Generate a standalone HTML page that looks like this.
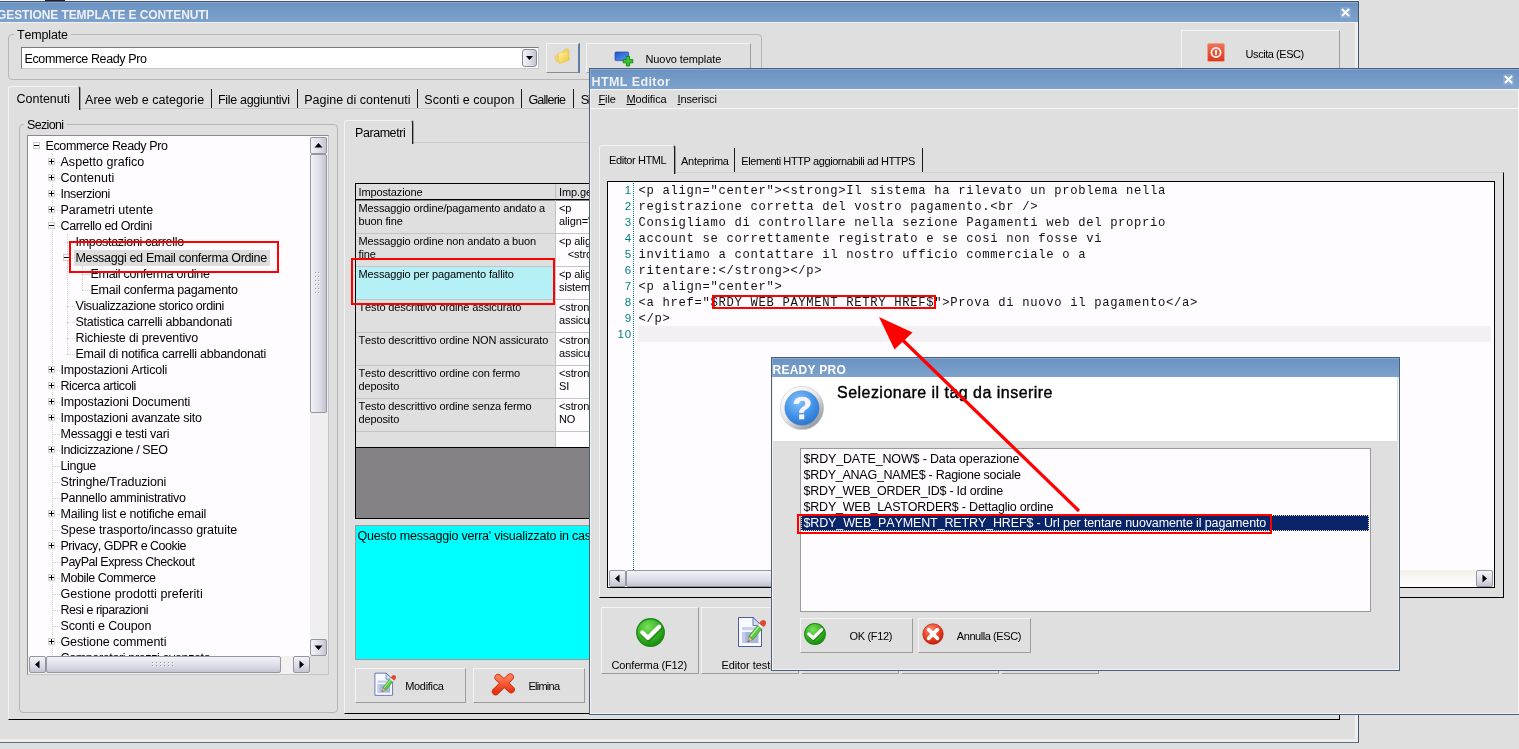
<!DOCTYPE html>
<html><head><meta charset="utf-8"><title>Gestione template e contenuti</title>
<style>
html,body{margin:0;padding:0}
body{font-kerning:none;will-change:transform;width:1519px;height:749px;overflow:hidden;background:#dfdfdf;position:relative;font-family:"Liberation Sans",sans-serif;color:#000}
.a{position:absolute;box-sizing:border-box}
.t13{font-size:12.5px;letter-spacing:-0.25px;white-space:nowrap;line-height:16px;margin-top:1px}
.t11{font-size:11px;letter-spacing:-0.12px;white-space:nowrap;line-height:13px;margin-top:1px}
.title{background:linear-gradient(#6a92c1,#7ea2cd);color:#eef0f4;font-weight:bold;white-space:nowrap}
.btn{border:1px solid;border-color:#f4f4f4 #9c9c9c #9c9c9c #f4f4f4;background:#dfdfdf;box-shadow:0 0 0 0 #000}
.grp{border:1px solid #b6b6b6;border-radius:4px}
.white{background:#fffcff}
.sb{background:linear-gradient(90deg,#f2f2f8,#dcdce6 60%,#c4c4d2);border:1px solid #9696a2;border-radius:2px}
.sbh{background:linear-gradient(#f2f2f8,#dcdce6 60%,#c4c4d2);border:1px solid #9696a2;border-radius:2px}
.red{border:2px solid #ff0000}
.tree div{position:absolute;height:16px;line-height:16px;font-size:12.5px;letter-spacing:-0.25px;white-space:nowrap}
.pm{position:absolute;width:7px;height:7px;box-sizing:border-box;border:1px solid #cdcdcd;background:#fff}
.pm:before{content:"";position:absolute;left:0px;top:2px;width:5px;height:1px;background:#000}
.pm.p:after{content:"";position:absolute;left:2px;top:0px;width:1px;height:5px;background:#000}
.code{font-family:"Liberation Mono",monospace;font-size:12.2px;letter-spacing:0.68px;line-height:16px;white-space:pre;color:#111;margin-top:1px}
.ln{font-size:11.5px;line-height:16px;color:#008080;text-align:right;letter-spacing:0.9px}
td{padding:0}
</style></head><body>

<div class="a" style="left:0;top:0;width:1359px;height:1px;background:#f6f6f6"></div>
<div class="a" style="left:45px;top:0;width:20px;height:1px;background:#222"></div>
<div class="a" style="left:0;top:1px;width:1359px;height:1px;background:#44546e"></div>
<div class="a" style="left:1355px;top:22px;width:3px;height:719px;background:#eeeeee"></div>
<div class="a" style="left:1358px;top:1px;width:1px;height:742px;background:#44546e"></div>
<div class="a" style="left:0;top:739px;width:1358px;height:3px;background:#eeeeee"></div>
<div class="a" style="left:0;top:742px;width:1359px;height:1px;background:#5a6c86"></div>
<div class="a title" style="left:0;top:2px;width:1358px;height:20px;font-size:12px;line-height:21px;letter-spacing:-0.1px;box-shadow:inset 0 1px 0 #86a8d2"><span style="position:absolute;left:-3px;top:3px">GESTIONE TEMPLATE E CONTENUTI</span></div>
<div class="a" style="left:0;top:22px;width:1355px;height:1px;background:#f0f0f0"></div>
<svg class="a" style="left:1340px;top:7px" width="11" height="11" viewBox="0 0 11 11"><rect width="11" height="11" fill="#ffffff" opacity="0.13"/><path d="M2.7 2.7 L8.3 8.3 M8.3 2.7 L2.7 8.3" stroke="#fff" stroke-width="2.1" stroke-linecap="square"/></svg>
<div class="a grp" style="left:8px;top:34px;width:754px;height:46px"></div>
<div class="a" style="left:14px;top:30px;width:57px;height:10px;background:#dfdfdf"></div>
<div class="a t13" style="left:17px;top:26px;letter-spacing:-0.16px;">Template</div>
<div class="a" style="left:21px;top:47px;width:518px;height:22px;background:#fff;border:1px solid #8e8e8e;border-color:#7a7a7a #c8c8c8 #c8c8c8 #7a7a7a"></div>
<div class="a t13" style="left:24.5px;top:50px;letter-spacing:-0.37px;">Ecommerce Ready Pro</div>
<div class="a sb" style="left:522px;top:49px;width:15px;height:18px;border-radius:3px;border-color:#8a8a9a"></div>
<svg class="a" style="left:526px;top:56px" width="8" height="5"><path d="M0 0 L7 0 L3.5 4 Z" fill="#000"/></svg>
<div class="a btn" style="left:546px;top:43px;width:34px;height:30px;border-right:2px solid #5f7fa8;border-bottom:1px solid #8a8a8a"></div>
<svg class="a" style="left:554px;top:48px" width="17" height="17" viewBox="0 0 17 17"><defs><linearGradient id="fg" x1="0" y1="0" x2="1" y2="1"><stop offset="0" stop-color="#fff6a8"/><stop offset="1" stop-color="#efc52e"/></linearGradient></defs><path d="M9.5 2.2 L11 1 L14.6 1 L15.2 11.5 L11 9 Z" fill="#f3d86a" stroke="#d8b84a" stroke-width="0.5"/><path d="M0.6 8.5 L4.2 5.2 L5.4 15.6 L1.6 13.2 Z" fill="#f2d55c" stroke="#d9c4e8" stroke-width="0.5"/><path d="M4.2 5.4 L13.8 2.8 L14.8 12.4 L5.4 15.6 Z" fill="url(#fg)" stroke="#e6c040" stroke-width="0.5"/></svg>
<div class="a btn" style="left:586px;top:43px;width:165px;height:30px"></div>
<svg class="a" style="left:614px;top:51px" width="20" height="16" viewBox="0 0 20 16"><defs><linearGradient id="mg" x1="0" y1="0" x2="1" y2="1"><stop offset="0" stop-color="#1f52c8"/><stop offset="1" stop-color="#5a9cf4"/></linearGradient></defs><rect x="1" y="1" width="13.6" height="8.6" rx="1" fill="url(#mg)" stroke="#2448b0" stroke-width="0.7"/><path d="M12.4 5.4 h3.2 v3.2 h3.2 v3.2 h-3.2 v3.2 h-3.2 v-3.2 h-3.2 v-3.2 h3.2 z" fill="#34c634" stroke="#118411" stroke-width="0.9"/></svg>
<div class="a t11" style="left:645.5px;top:52px;letter-spacing:-0.1px;">Nuovo template</div>
<div class="a btn" style="left:1181px;top:30px;width:159px;height:44px"></div>
<svg class="a" style="left:1207px;top:43px" width="18" height="19" viewBox="0 0 18 19"><defs><linearGradient id="ug" x1="0" y1="0" x2="0" y2="1"><stop offset="0" stop-color="#f2735a"/><stop offset="1" stop-color="#d8381c"/></linearGradient></defs><rect x="0.5" y="0.5" width="17" height="18" rx="1.5" fill="url(#ug)" stroke="#e9a08c"/><circle cx="9" cy="9.5" r="4.6" fill="none" stroke="#fff" stroke-width="1.6"/><rect x="8.2" y="6.8" width="1.6" height="5.4" fill="#fff"/></svg>
<div class="a t11" style="left:1245.6px;top:47px;letter-spacing:-0.45px;">Uscita (ESC)</div>
<div class="a" style="left:8px;top:108px;width:1332px;height:612px;border:1px solid #f2f2f2;border-right:1px solid #000;border-bottom:1px solid #000;border-top:1px solid #c8c8c8"></div>
<div class="a t13" style="left:85px;top:91px;letter-spacing:0.05px;">Aree web e categorie</div>
<div class="a" style="left:211px;top:89px;width:1px;height:19px;background:#1a1a1a"></div>
<div class="a t13" style="left:218px;top:91px;letter-spacing:-0.32px;">File aggiuntivi</div>
<div class="a" style="left:297px;top:89px;width:1px;height:19px;background:#1a1a1a"></div>
<div class="a t13" style="left:304.3px;top:91px;letter-spacing:-0.01px;">Pagine di contenuti</div>
<div class="a" style="left:417px;top:89px;width:1px;height:19px;background:#1a1a1a"></div>
<div class="a t13" style="left:424.3px;top:91px;letter-spacing:0.04px;">Sconti e coupon</div>
<div class="a" style="left:521px;top:89px;width:1px;height:19px;background:#1a1a1a"></div>
<div class="a t13" style="left:528.4px;top:91px;letter-spacing:-0.78px;">Gallerie</div>
<div class="a" style="left:573px;top:89px;width:1px;height:19px;background:#1a1a1a"></div>
<div class="a t13" style="left:580.8px;top:91px;letter-spacing:-1.41px;">Si</div>
<div class="a" style="left:640px;top:89px;width:1px;height:19px;background:#1a1a1a"></div>
<div class="a" style="left:8px;top:86px;width:72px;height:24px;background:#dfdfdf;border:1px solid #f2f2f2;border-right:1px solid #1a1a1a;box-shadow:1px 0 0 #9a9a9a;border-bottom:none;border-radius:3px 3px 0 0"></div>
<div class="a t13" style="left:16.5px;top:90px;letter-spacing:-0.0px;">Contenuti</div>
<div class="a grp" style="left:19px;top:124px;width:319px;height:589px"></div>
<div class="a" style="left:24px;top:120px;width:43px;height:10px;background:#dfdfdf"></div>
<div class="a t13" style="left:27px;top:116px;letter-spacing:-0.67px;">Sezioni</div>
<div class="a white tree" style="left:27px;top:135px;width:302px;height:540px;border:1px solid #9a9a9a;border-color:#8a8a8a #c4c4c4 #c4c4c4 #8a8a8a;overflow:hidden">
<i class="a" style="left:24px;top:18px;width:0;height:521px;border-left:1px dotted #cfcfcf"></i>
<i class="a" style="left:39px;top:98px;width:0;height:120px;border-left:1px dotted #cfcfcf"></i>
<i class="a" style="left:54px;top:130px;width:0;height:24px;border-left:1px dotted #cfcfcf"></i>
<div style="left:17.5px;top:2px;letter-spacing:-0.37px">Ecommerce Ready Pro</div>
<span class="pm" style="left:5.0px;top:6px"></span>
<i class="a" style="left:28.5px;top:26px;width:3.0px;height:0;border-top:1px dotted #cfcfcf"></i>
<div style="left:32.5px;top:18px;letter-spacing:0.03px">Aspetto grafico</div>
<span class="pm p" style="left:20.0px;top:22px"></span>
<i class="a" style="left:28.5px;top:42px;width:3.0px;height:0;border-top:1px dotted #cfcfcf"></i>
<div style="left:32.5px;top:34px;letter-spacing:0.02px">Contenuti</div>
<span class="pm p" style="left:20.0px;top:38px"></span>
<i class="a" style="left:28.5px;top:58px;width:3.0px;height:0;border-top:1px dotted #cfcfcf"></i>
<div style="left:32.5px;top:50px;letter-spacing:-0.41px">Inserzioni</div>
<span class="pm p" style="left:20.0px;top:54px"></span>
<i class="a" style="left:28.5px;top:74px;width:3.0px;height:0;border-top:1px dotted #cfcfcf"></i>
<div style="left:32.5px;top:66px;letter-spacing:0.02px">Parametri utente</div>
<span class="pm p" style="left:20.0px;top:70px"></span>
<i class="a" style="left:28.5px;top:90px;width:3.0px;height:0;border-top:1px dotted #cfcfcf"></i>
<div style="left:32.5px;top:82px;letter-spacing:-0.37px">Carrello ed Ordini</div>
<span class="pm" style="left:20.0px;top:86px"></span>
<i class="a" style="left:38.5px;top:106px;width:8.0px;height:0;border-top:1px dotted #cfcfcf"></i>
<div style="left:47.5px;top:98px;letter-spacing:-0.3px">Impostazioni carrello</div>
<i class="a" style="left:43.5px;top:122px;width:3.0px;height:0;border-top:1px dotted #cfcfcf"></i>
<div style="left:47.5px;top:114px;letter-spacing:-0.33px;background:#dcdcdc;padding:0 3px 0 2px;margin-left:-2px">Messaggi ed Email conferma Ordine</div>
<span class="pm" style="left:35.0px;top:118px"></span>
<i class="a" style="left:53.5px;top:138px;width:8.0px;height:0;border-top:1px dotted #cfcfcf"></i>
<div style="left:62.5px;top:130px;letter-spacing:-0.28px">Email conferma ordine</div>
<i class="a" style="left:53.5px;top:154px;width:8.0px;height:0;border-top:1px dotted #cfcfcf"></i>
<div style="left:62.5px;top:146px;letter-spacing:-0.23px">Email conferma pagamento</div>
<i class="a" style="left:38.5px;top:170px;width:8.0px;height:0;border-top:1px dotted #cfcfcf"></i>
<div style="left:47.5px;top:162px;letter-spacing:-0.4px">Visualizzazione storico ordini</div>
<i class="a" style="left:38.5px;top:186px;width:8.0px;height:0;border-top:1px dotted #cfcfcf"></i>
<div style="left:47.5px;top:178px;letter-spacing:-0.22px">Statistica carrelli abbandonati</div>
<i class="a" style="left:38.5px;top:202px;width:8.0px;height:0;border-top:1px dotted #cfcfcf"></i>
<div style="left:47.5px;top:194px;letter-spacing:-0.14px">Richieste di preventivo</div>
<i class="a" style="left:38.5px;top:218px;width:8.0px;height:0;border-top:1px dotted #cfcfcf"></i>
<div style="left:47.5px;top:210px;letter-spacing:-0.25px">Email di notifica carrelli abbandonati</div>
<i class="a" style="left:28.5px;top:234px;width:3.0px;height:0;border-top:1px dotted #cfcfcf"></i>
<div style="left:32.5px;top:226px;letter-spacing:-0.22px">Impostazioni Articoli</div>
<span class="pm p" style="left:20.0px;top:230px"></span>
<i class="a" style="left:28.5px;top:250px;width:3.0px;height:0;border-top:1px dotted #cfcfcf"></i>
<div style="left:32.5px;top:242px;letter-spacing:-0.41px">Ricerca articoli</div>
<span class="pm p" style="left:20.0px;top:246px"></span>
<i class="a" style="left:28.5px;top:266px;width:3.0px;height:0;border-top:1px dotted #cfcfcf"></i>
<div style="left:32.5px;top:258px;letter-spacing:-0.17px">Impostazioni Documenti</div>
<span class="pm p" style="left:20.0px;top:262px"></span>
<i class="a" style="left:28.5px;top:282px;width:3.0px;height:0;border-top:1px dotted #cfcfcf"></i>
<div style="left:32.5px;top:274px;letter-spacing:-0.23px">Impostazioni avanzate sito</div>
<span class="pm p" style="left:20.0px;top:278px"></span>
<i class="a" style="left:23.5px;top:298px;width:8.0px;height:0;border-top:1px dotted #cfcfcf"></i>
<div style="left:32.5px;top:290px;letter-spacing:-0.25px">Messaggi e testi vari</div>
<i class="a" style="left:28.5px;top:314px;width:3.0px;height:0;border-top:1px dotted #cfcfcf"></i>
<div style="left:32.5px;top:306px;letter-spacing:-0.42px">Indicizzazione / SEO</div>
<span class="pm p" style="left:20.0px;top:310px"></span>
<i class="a" style="left:23.5px;top:330px;width:8.0px;height:0;border-top:1px dotted #cfcfcf"></i>
<div style="left:32.5px;top:322px;letter-spacing:-0.35px">Lingue</div>
<i class="a" style="left:23.5px;top:346px;width:8.0px;height:0;border-top:1px dotted #cfcfcf"></i>
<div style="left:32.5px;top:338px;letter-spacing:-0.14px">Stringhe/Traduzioni</div>
<i class="a" style="left:23.5px;top:362px;width:8.0px;height:0;border-top:1px dotted #cfcfcf"></i>
<div style="left:32.5px;top:354px;letter-spacing:-0.33px">Pannello amministrativo</div>
<i class="a" style="left:28.5px;top:378px;width:3.0px;height:0;border-top:1px dotted #cfcfcf"></i>
<div style="left:32.5px;top:370px;letter-spacing:-0.22px">Mailing list e notifiche email</div>
<span class="pm p" style="left:20.0px;top:374px"></span>
<i class="a" style="left:23.5px;top:394px;width:8.0px;height:0;border-top:1px dotted #cfcfcf"></i>
<div style="left:32.5px;top:386px;letter-spacing:-0.08px">Spese trasporto/incasso gratuite</div>
<i class="a" style="left:28.5px;top:410px;width:3.0px;height:0;border-top:1px dotted #cfcfcf"></i>
<div style="left:32.5px;top:402px;letter-spacing:-0.52px">Privacy, GDPR e Cookie</div>
<span class="pm p" style="left:20.0px;top:406px"></span>
<i class="a" style="left:23.5px;top:426px;width:8.0px;height:0;border-top:1px dotted #cfcfcf"></i>
<div style="left:32.5px;top:418px;letter-spacing:-0.46px">PayPal Express Checkout</div>
<i class="a" style="left:28.5px;top:442px;width:3.0px;height:0;border-top:1px dotted #cfcfcf"></i>
<div style="left:32.5px;top:434px;letter-spacing:-0.42px">Mobile Commerce</div>
<span class="pm p" style="left:20.0px;top:438px"></span>
<i class="a" style="left:23.5px;top:458px;width:8.0px;height:0;border-top:1px dotted #cfcfcf"></i>
<div style="left:32.5px;top:450px;letter-spacing:0.07px">Gestione prodotti preferiti</div>
<i class="a" style="left:23.5px;top:474px;width:8.0px;height:0;border-top:1px dotted #cfcfcf"></i>
<div style="left:32.5px;top:466px;letter-spacing:-0.5px">Resi e riparazioni</div>
<i class="a" style="left:23.5px;top:490px;width:8.0px;height:0;border-top:1px dotted #cfcfcf"></i>
<div style="left:32.5px;top:482px;letter-spacing:-0.11px">Sconti e Coupon</div>
<i class="a" style="left:28.5px;top:506px;width:3.0px;height:0;border-top:1px dotted #cfcfcf"></i>
<div style="left:32.5px;top:498px;letter-spacing:-0.11px">Gestione commenti</div>
<span class="pm p" style="left:20.0px;top:502px"></span>
<i class="a" style="left:23.5px;top:522px;width:8.0px;height:0;border-top:1px dotted #cfcfcf"></i>
<div style="left:32.5px;top:514px;letter-spacing:-0.37px">Comparatori prezzi avanzato</div>
</div>
<div class="a" style="left:310px;top:137px;width:18px;height:520px;background:#efefef"></div>
<div class="a sb" style="left:310px;top:137px;width:17px;height:17px"></div>
<svg class="a" style="left:314px;top:142px" width="9" height="6"><path d="M0.5 5.5 L8.5 5.5 L4.5 1 Z" fill="#000"/></svg>
<div class="a sb" style="left:310px;top:154px;width:17px;height:259px"></div>
<i class="a" style="left:315px;top:272px;width:1px;height:1px;background:#9a9aa8;box-shadow:3px 0 #9a9aa8,1px 1px #fff,4px 1px #fff"></i>
<i class="a" style="left:315px;top:276px;width:1px;height:1px;background:#9a9aa8;box-shadow:3px 0 #9a9aa8,1px 1px #fff,4px 1px #fff"></i>
<i class="a" style="left:315px;top:280px;width:1px;height:1px;background:#9a9aa8;box-shadow:3px 0 #9a9aa8,1px 1px #fff,4px 1px #fff"></i>
<i class="a" style="left:315px;top:284px;width:1px;height:1px;background:#9a9aa8;box-shadow:3px 0 #9a9aa8,1px 1px #fff,4px 1px #fff"></i>
<i class="a" style="left:315px;top:288px;width:1px;height:1px;background:#9a9aa8;box-shadow:3px 0 #9a9aa8,1px 1px #fff,4px 1px #fff"></i>
<i class="a" style="left:315px;top:292px;width:1px;height:1px;background:#9a9aa8;box-shadow:3px 0 #9a9aa8,1px 1px #fff,4px 1px #fff"></i>
<div class="a sb" style="left:310px;top:639px;width:17px;height:17px"></div>
<svg class="a" style="left:314px;top:645px" width="9" height="6"><path d="M0.5 0.5 L8.5 0.5 L4.5 5 Z" fill="#000"/></svg>
<div class="a" style="left:28px;top:656px;width:300px;height:18px;background:#f3f1f0"></div>
<div class="a" style="left:310px;top:656px;width:18px;height:18px;background:#dfdfdf"></div>
<div class="a sbh" style="left:29px;top:656px;width:17px;height:17px"></div>
<svg class="a" style="left:34px;top:660px" width="6" height="9"><path d="M5.5 0.5 L5.5 8.5 L1 4.5 Z" fill="#000"/></svg>
<div class="a sbh" style="left:46px;top:656px;width:235px;height:17px"></div>
<i class="a" style="left:152px;top:662px;width:1px;height:1px;background:#9a9aa8;box-shadow:0 3px #9a9aa8,1px 1px #fff,1px 4px #fff"></i>
<i class="a" style="left:156px;top:662px;width:1px;height:1px;background:#9a9aa8;box-shadow:0 3px #9a9aa8,1px 1px #fff,1px 4px #fff"></i>
<i class="a" style="left:160px;top:662px;width:1px;height:1px;background:#9a9aa8;box-shadow:0 3px #9a9aa8,1px 1px #fff,1px 4px #fff"></i>
<i class="a" style="left:164px;top:662px;width:1px;height:1px;background:#9a9aa8;box-shadow:0 3px #9a9aa8,1px 1px #fff,1px 4px #fff"></i>
<i class="a" style="left:168px;top:662px;width:1px;height:1px;background:#9a9aa8;box-shadow:0 3px #9a9aa8,1px 1px #fff,1px 4px #fff"></i>
<i class="a" style="left:172px;top:662px;width:1px;height:1px;background:#9a9aa8;box-shadow:0 3px #9a9aa8,1px 1px #fff,1px 4px #fff"></i>
<div class="a sbh" style="left:293px;top:656px;width:17px;height:17px"></div>
<svg class="a" style="left:299px;top:660px" width="6" height="9"><path d="M0.5 0.5 L0.5 8.5 L5 4.5 Z" fill="#000"/></svg>
<div class="a red" style="left:69px;top:241px;width:210px;height:32px"></div>
<div class="a" style="left:344px;top:142px;width:400px;height:572px;border:1px solid #f2f2f2;border-bottom:1px solid #000;border-top:1px solid #c8c8c8"></div>
<div class="a" style="left:344px;top:120px;width:69px;height:24px;background:#dfdfdf;border:1px solid #f2f2f2;border-right:1px solid #1a1a1a;box-shadow:1px 0 0 #9a9a9a;border-bottom:none;border-radius:3px 3px 0 0"></div>
<div class="a t13" style="left:355px;top:124px;letter-spacing:-0.44px;">Parametri</div>
<div class="a" style="left:355px;top:183px;width:300px;height:336px;background:#848284;border:1px solid #000"></div>
<div class="a" style="left:356px;top:184px;width:300px;height:16px;background:#dfdfdf;border-bottom:1px solid #000"></div>
<div class="a t11" style="left:358.5px;top:185px">Impostazione</div>
<div class="a t11" style="left:559px;top:185px">Imp.gen</div>
<div class="a" style="left:555px;top:184px;width:1px;height:15px;background:#c0c0c0"></div>
<div class="a t11" style="left:356px;top:200px;width:199px;height:33px;background:#dfdfdf;border-bottom:1px solid #c4c4c4;padding:1px 0 0 2.5px;white-space:nowrap">Messaggio ordine/pagamento andato a<br>buon fine</div>
<div class="a" style="left:555px;top:200px;width:1px;height:33px;background:#c4c4c4"></div>
<div class="a t11" style="left:556px;top:200px;width:60px;height:33px;background:#fffcff;border-bottom:1px solid #c4c4c4;padding:1px 0 0 3px;overflow:hidden">&lt;p<br>align=&quot;c</div>
<div class="a t11" style="left:356px;top:233px;width:199px;height:33px;background:#dfdfdf;border-bottom:1px solid #c4c4c4;padding:1px 0 0 2.5px;white-space:nowrap">Messaggio ordine non andato a buon<br>fine</div>
<div class="a" style="left:555px;top:233px;width:1px;height:33px;background:#c4c4c4"></div>
<div class="a t11" style="left:556px;top:233px;width:60px;height:33px;background:#fffcff;border-bottom:1px solid #c4c4c4;padding:1px 0 0 3px;overflow:hidden">&lt;p align<br>&nbsp; &nbsp;&lt;stron</div>
<div class="a t11" style="left:356px;top:266px;width:199px;height:33px;background:#b4f0f6;border-bottom:1px solid #c4c4c4;padding:1px 0 0 2.5px;white-space:nowrap">Messaggio per pagamento fallito</div>
<div class="a" style="left:555px;top:266px;width:1px;height:33px;background:#c4c4c4"></div>
<div class="a t11" style="left:556px;top:266px;width:60px;height:33px;background:#fffcff;border-bottom:1px solid #c4c4c4;padding:1px 0 0 3px;overflow:hidden">&lt;p align<br>sistema</div>
<div class="a t11" style="left:356px;top:299px;width:199px;height:33px;background:#dfdfdf;border-bottom:1px solid #c4c4c4;padding:1px 0 0 2.5px;white-space:nowrap">Testo descrittivo ordine assicurato</div>
<div class="a" style="left:555px;top:299px;width:1px;height:33px;background:#c4c4c4"></div>
<div class="a t11" style="left:556px;top:299px;width:60px;height:33px;background:#fffcff;border-bottom:1px solid #c4c4c4;padding:1px 0 0 3px;overflow:hidden">&lt;strong<br>assicura</div>
<div class="a t11" style="left:356px;top:332px;width:199px;height:33px;background:#dfdfdf;border-bottom:1px solid #c4c4c4;padding:1px 0 0 2.5px;white-space:nowrap">Testo descrittivo ordine NON assicurato</div>
<div class="a" style="left:555px;top:332px;width:1px;height:33px;background:#c4c4c4"></div>
<div class="a t11" style="left:556px;top:332px;width:60px;height:33px;background:#fffcff;border-bottom:1px solid #c4c4c4;padding:1px 0 0 3px;overflow:hidden">&lt;strong<br>assicura</div>
<div class="a t11" style="left:356px;top:365px;width:199px;height:33px;background:#dfdfdf;border-bottom:1px solid #c4c4c4;padding:1px 0 0 2.5px;white-space:nowrap">Testo descrittivo ordine con fermo<br>deposito</div>
<div class="a" style="left:555px;top:365px;width:1px;height:33px;background:#c4c4c4"></div>
<div class="a t11" style="left:556px;top:365px;width:60px;height:33px;background:#fffcff;border-bottom:1px solid #c4c4c4;padding:1px 0 0 3px;overflow:hidden">&lt;strong<br>SI</div>
<div class="a t11" style="left:356px;top:398px;width:199px;height:33px;background:#dfdfdf;border-bottom:1px solid #c4c4c4;padding:1px 0 0 2.5px;white-space:nowrap">Testo descrittivo ordine senza fermo<br>deposito</div>
<div class="a" style="left:555px;top:398px;width:1px;height:33px;background:#c4c4c4"></div>
<div class="a t11" style="left:556px;top:398px;width:60px;height:33px;background:#fffcff;border-bottom:1px solid #c4c4c4;padding:1px 0 0 3px;overflow:hidden">&lt;strong<br>NO</div>
<div class="a t11" style="left:356px;top:431px;width:199px;height:16px;background:#dfdfdf;border-bottom:1px solid #c4c4c4;padding:1px 0 0 2.5px;white-space:nowrap"></div>
<div class="a" style="left:555px;top:431px;width:1px;height:16px;background:#c4c4c4"></div>
<div class="a t11" style="left:556px;top:431px;width:60px;height:16px;background:#fffcff;border-bottom:1px solid #c4c4c4;padding:1px 0 0 3px;overflow:hidden"></div>
<div class="a" style="left:356px;top:447px;width:300px;height:1px;background:#000"></div>
<div class="a red" style="left:351px;top:258px;width:204px;height:47px"></div>
<div class="a" style="left:355px;top:525px;width:300px;height:135px;background:#00ffff;border:1px solid #9a9a9a"></div>
<div class="a t13" style="left:357.5px;top:527px;letter-spacing:-0.22px">Questo messaggio verra' visualizzato in caso di</div>
<div class="a btn" style="left:355px;top:668px;width:111px;height:35px"></div>
<svg class="a" style="left:373px;top:672px" width="23" height="24.5" viewBox="0 0 30 32"><path d="M2.5 1.5 H17 L25.5 9.5 V30.5 H2.5 Z" fill="#f6f9ff" stroke="#4c5c9c" stroke-width="1"/><path d="M17 1.5 V9.5 H25.5 Z" fill="#cfe0f8" stroke="#4c5c9c" stroke-width="0.8"/><rect x="6" y="11" width="16.5" height="3.2" fill="#c6d0f0"/><rect x="6" y="16" width="16.5" height="11" fill="#a9b5df"/><rect x="6" y="16" width="3.4" height="11" fill="#c0caec"/><path d="M17.06 23.54 L12.88 20.12 L11.6 26 Z" fill="#d8b888" stroke="#8a7a6a" stroke-width="0.5"/><path d="M12.9 24.2 L11.6 26 L13.6 25 Z" fill="#444"/><path d="M17.06 23.54 L12.88 20.12 L21.76 9.3 L25.94 12.72 Z" fill="#5cc83c" stroke="#2f9220" stroke-width="0.6"/><path d="M14.6 20.6 L22.6 10.9" stroke="#b4f0a0" stroke-width="1.3" fill="none"/><path d="M21.76 9.3 L25.94 12.72 L27.52 10.79 L23.34 7.37 Z" fill="#f4f4f4" stroke="#b8b8b8" stroke-width="0.4"/><path d="M23.34 7.37 L27.52 10.79 Q31 8.4 29.2 5.2 Q26.4 2.6 23.34 7.37 Z" fill="#e8452a" stroke="#c02a14" stroke-width="0.4"/></svg>
<div class="a t11" style="left:405.2px;top:679px;letter-spacing:-0.31px;">Modifica</div>
<div class="a btn" style="left:473px;top:668px;width:112px;height:35px"></div>
<svg class="a" style="left:491px;top:672px" width="25" height="24" viewBox="0 0 25 24"><defs><linearGradient id="xg" x1="0" y1="0" x2="0" y2="1"><stop offset="0" stop-color="#ff7a56"/><stop offset="1" stop-color="#e63414"/></linearGradient></defs><g fill="none" stroke-linecap="round"><path d="M4.6 19.6 L19.2 5.2 M7.2 5.6 L20.2 17.6" stroke="#c62a0c" stroke-width="7.4"/><path d="M4.6 19.6 L19.2 5.2 M7.2 5.6 L20.2 17.6" stroke="url(#xg)" stroke-width="6"/></g></svg>
<div class="a t11" style="left:528.4px;top:679px;letter-spacing:-0.74px;">Elimina</div>
<div class="a" style="left:589px;top:68px;width:931px;height:647px;background:#dfdfdf;border:1px solid #4a607c;box-shadow:inset 1px 1px 0 #f2f2f2,inset -1px -1px 0 #f2f2f2"></div>
<div class="a title" style="left:590px;top:69px;width:929px;height:20px;box-shadow:inset 1px 1px 0 #86a8d2;font-size:12.5px;line-height:21px;letter-spacing:0.4px"><span style="position:absolute;left:1.5px;top:3px">HTML Editor</span></div>
<svg class="a" style="left:1503px;top:74px" width="11" height="11" viewBox="0 0 11 11"><rect width="11" height="11" fill="#ffffff" opacity="0.13"/><path d="M2.7 2.7 L8.3 8.3 M8.3 2.7 L2.7 8.3" stroke="#fff" stroke-width="2.1" stroke-linecap="square"/></svg>
<div class="a t11" style="left:598.5px;top:92px"><u>F</u>ile</div>
<div class="a t11" style="left:626.5px;top:92px"><u>M</u>odifica</div>
<div class="a t11" style="left:677.5px;top:92px"><u>I</u>nserisci</div>
<div class="a" style="left:591px;top:108px;width:928px;height:1px;background:#f6f6f6"></div>
<div class="a" style="left:591px;top:89px;width:928px;height:1px;background:#f4f4f4"></div>
<div class="a" style="left:599px;top:172px;width:905px;height:426px;border:1px solid #f2f2f2;border-top:1px solid #d0d0d0;border-right:1px solid #000;border-bottom:1px solid #000"></div>
<div class="a t11" style="left:681px;top:153.5px;letter-spacing:-0.27px;">Anteprima</div>
<div class="a" style="left:734px;top:148px;width:1px;height:24px;background:#1a1a1a"></div>
<div class="a t11" style="left:741.3px;top:153.5px;letter-spacing:-0.42px;">Elementi HTTP aggiornabili ad HTTPS</div>
<div class="a" style="left:922px;top:148px;width:1px;height:24px;background:#1a1a1a"></div>
<div class="a" style="left:599px;top:145px;width:76px;height:29px;background:#dfdfdf;border:1px solid #f2f2f2;border-right:1px solid #1a1a1a;box-shadow:1px 0 0 #9a9a9a;border-bottom:none;border-radius:3px 3px 0 0"></div>
<div class="a t11" style="left:609px;top:153px;letter-spacing:-0.4px">Editor HTML</div>
<div class="a white" style="left:607px;top:181px;width:888px;height:407px;border:1px solid #000"></div>
<div class="a" style="left:638px;top:326px;width:853px;height:16px;background:#f3f0f3"></div>
<div class="a" style="left:633px;top:183px;width:0;height:387px;border-left:1px dotted #008080"></div>
<div class="a ln" style="left:609px;top:182px;width:23px">1</div>
<div class="a code" style="left:638.5px;top:182px">&lt;p align="center"&gt;&lt;strong&gt;Il sistema ha rilevato un problema nella</div>
<div class="a ln" style="left:609px;top:198px;width:23px">2</div>
<div class="a code" style="left:638.5px;top:198px">registrazione corretta del vostro pagamento.&lt;br /&gt;</div>
<div class="a ln" style="left:609px;top:214px;width:23px">3</div>
<div class="a code" style="left:638.5px;top:214px">Consigliamo di controllare nella sezione Pagamenti web del proprio</div>
<div class="a ln" style="left:609px;top:230px;width:23px">4</div>
<div class="a code" style="left:638.5px;top:230px">account se correttamente registrato e se cosi non fosse vi</div>
<div class="a ln" style="left:609px;top:246px;width:23px">5</div>
<div class="a code" style="left:638.5px;top:246px">invitiamo a contattare il nostro ufficio commerciale o a</div>
<div class="a ln" style="left:609px;top:262px;width:23px">6</div>
<div class="a code" style="left:638.5px;top:262px">ritentare:&lt;/strong&gt;&lt;/p&gt;</div>
<div class="a ln" style="left:609px;top:278px;width:23px">7</div>
<div class="a code" style="left:638.5px;top:278px">&lt;p align="center"&gt;</div>
<div class="a ln" style="left:609px;top:294px;width:23px">8</div>
<div class="a code" style="left:638.5px;top:294px">&lt;a href="$RDY_WEB_PAYMENT_RETRY_HREF$"&gt;Prova di nuovo il pagamento&lt;/a&gt;</div>
<div class="a ln" style="left:609px;top:310px;width:23px">9</div>
<div class="a code" style="left:638.5px;top:310px">&lt;/p&gt;</div>
<div class="a ln" style="left:609px;top:326px;width:23px">10</div>
<div class="a" style="left:609px;top:570px;width:885px;height:17px;background:linear-gradient(#f3f1ea,#fff)"></div>
<div class="a sbh" style="left:609px;top:570px;width:17px;height:17px"></div>
<svg class="a" style="left:614px;top:574px" width="6" height="9"><path d="M5.5 0.5 L5.5 8.5 L1 4.5 Z" fill="#000"/></svg>
<div class="a sbh" style="left:626px;top:570px;width:720px;height:17px"></div>
<div class="a sbh" style="left:1476px;top:570px;width:17px;height:17px"></div>
<svg class="a" style="left:1482px;top:574px" width="6" height="9"><path d="M0.5 0.5 L0.5 8.5 L5 4.5 Z" fill="#000"/></svg>
<div class="a red" style="left:711.5px;top:295px;width:224px;height:14px"></div>
<div class="a btn" style="left:601px;top:607px;width:98px;height:67px"></div>
<div class="a btn" style="left:701px;top:607px;width:98px;height:67px"></div>
<div class="a btn" style="left:801px;top:607px;width:98px;height:67px"></div>
<div class="a btn" style="left:901px;top:607px;width:98px;height:67px"></div>
<div class="a btn" style="left:1001px;top:607px;width:98px;height:67px"></div>
<svg class="a" style="left:635.5px;top:617.5px" width="29" height="29" viewBox="0 0 30 30"><defs><radialGradient id="cg1" cx="0.4" cy="0.3" r="0.8"><stop offset="0" stop-color="#7be05a"/><stop offset="0.6" stop-color="#2fae1e"/><stop offset="1" stop-color="#14780e"/></radialGradient></defs><circle cx="15" cy="15" r="14.2" fill="url(#cg1)" stroke="#1b8a16" stroke-width="1.4"/><path d="M6.5 15.5 L12.5 21 L24 9.5" fill="none" stroke="#0c5a08" stroke-width="5.2" stroke-linecap="round" stroke-linejoin="round" opacity="0.45" transform="translate(0.6,1)"/><path d="M6.5 15 L12.5 20.5 L24 9" fill="none" stroke="#fff" stroke-width="4.4" stroke-linecap="round" stroke-linejoin="round"/></svg>
<div class="a t11" style="left:611.5px;top:657.5px;letter-spacing:-0.15px;">Conferma (F12)</div>
<svg class="a" style="left:736px;top:616px" width="30" height="32" viewBox="0 0 30 32"><path d="M2.5 1.5 H17 L25.5 9.5 V30.5 H2.5 Z" fill="#f6f9ff" stroke="#4c5c9c" stroke-width="1"/><path d="M17 1.5 V9.5 H25.5 Z" fill="#cfe0f8" stroke="#4c5c9c" stroke-width="0.8"/><rect x="6" y="11" width="16.5" height="3.2" fill="#c6d0f0"/><rect x="6" y="16" width="16.5" height="11" fill="#a9b5df"/><rect x="6" y="16" width="3.4" height="11" fill="#c0caec"/><path d="M17.06 23.54 L12.88 20.12 L11.6 26 Z" fill="#d8b888" stroke="#8a7a6a" stroke-width="0.5"/><path d="M12.9 24.2 L11.6 26 L13.6 25 Z" fill="#444"/><path d="M17.06 23.54 L12.88 20.12 L21.76 9.3 L25.94 12.72 Z" fill="#5cc83c" stroke="#2f9220" stroke-width="0.6"/><path d="M14.6 20.6 L22.6 10.9" stroke="#b4f0a0" stroke-width="1.3" fill="none"/><path d="M21.76 9.3 L25.94 12.72 L27.52 10.79 L23.34 7.37 Z" fill="#f4f4f4" stroke="#b8b8b8" stroke-width="0.4"/><path d="M23.34 7.37 L27.52 10.79 Q31 8.4 29.2 5.2 Q26.4 2.6 23.34 7.37 Z" fill="#e8452a" stroke="#c02a14" stroke-width="0.4"/></svg>
<div class="a t11" style="left:721.4px;top:657.5px;letter-spacing:-0.07px">Editor testo</div>
<div class="a" style="left:771px;top:357px;width:629px;height:314px;background:#dfdfdf;border:1px solid #4a607c;box-shadow:inset 1px 1px 0 #f2f2f2,inset -1px -1px 0 #f2f2f2"></div>
<div class="a title" style="left:772px;top:358px;width:627px;height:19px;font-size:12px;line-height:18px;color:#fff;letter-spacing:0.25px;box-shadow:inset 1px 1px 0 #86a8d2"><span style="position:absolute;left:0.5px;top:3px">READY PRO</span></div>
<div class="a" style="left:773px;top:377px;width:624px;height:64px;background:#fff"></div>
<svg class="a" style="left:780px;top:386px" width="44" height="44" viewBox="0 0 44 44"><defs><linearGradient id="qr" x1="0.15" y1="0.1" x2="0.85" y2="0.95"><stop offset="0" stop-color="#ffffff"/><stop offset="0.45" stop-color="#e6e6e6"/><stop offset="1" stop-color="#8c9096"/></linearGradient><radialGradient id="qb" cx="0.4" cy="0.3" r="0.85"><stop offset="0" stop-color="#86c2f8"/><stop offset="0.55" stop-color="#3f90e8"/><stop offset="1" stop-color="#2468c0"/></radialGradient></defs><circle cx="22" cy="22" r="21.6" fill="url(#qr)" stroke="#b4b6ba" stroke-width="0.5"/><circle cx="22" cy="22" r="17.2" fill="url(#qb)" stroke="#5c88b8" stroke-width="0.5"/><text x="22.2" y="33.4" text-anchor="middle" font-family="Liberation Sans,sans-serif" font-weight="bold" font-size="32" fill="#f6f4fc" stroke="#f6f4fc" stroke-width="0.7">?</text></svg>
<div class="a" style="left:837px;top:383.2px;font-size:16px;-webkit-text-stroke:0.4px #000;line-height:20px;white-space:nowrap;letter-spacing:0.47px">Selezionare il tag da inserire</div>
<div class="a white" style="left:800px;top:448px;width:571px;height:164px;border:1px solid #9a9a9a"></div>
<div class="a t13" style="left:803.5px;top:450px;letter-spacing:-0.16px;">$RDY_DATE_NOW$ - Data operazione</div>
<div class="a t13" style="left:803.5px;top:466px;letter-spacing:-0.26px;">$RDY_ANAG_NAME$ - Ragione sociale</div>
<div class="a t13" style="left:803.5px;top:482px;letter-spacing:-0.25px;">$RDY_WEB_ORDER_ID$ - Id ordine</div>
<div class="a t13" style="left:803.5px;top:498px;letter-spacing:-0.21px;">$RDY_WEB_LASTORDER$ - Dettaglio ordine</div>
<div class="a" style="left:801px;top:515px;width:568px;height:16px;background:#0a246a;outline:1px dotted #e8d8a0;outline-offset:-1px"></div>
<div class="a t13" style="left:803.5px;top:514px;letter-spacing:-0.13px;color:#fff">$RDY_WEB_PAYMENT_RETRY_HREF$ - Url per tentare nuovamente il pagamento</div>
<div class="a red" style="left:797px;top:514px;width:475px;height:20px"></div>
<div class="a btn" style="left:800px;top:618px;width:113px;height:35px"></div>
<svg class="a" style="left:804px;top:623px" width="22" height="22" viewBox="0 0 30 30"><defs><radialGradient id="cg2" cx="0.4" cy="0.3" r="0.8"><stop offset="0" stop-color="#7be05a"/><stop offset="0.6" stop-color="#2fae1e"/><stop offset="1" stop-color="#14780e"/></radialGradient></defs><circle cx="15" cy="15" r="14.2" fill="url(#cg2)" stroke="#1b8a16" stroke-width="1.4"/><path d="M6.5 15.5 L12.5 21 L24 9.5" fill="none" stroke="#0c5a08" stroke-width="5.2" stroke-linecap="round" stroke-linejoin="round" opacity="0.45" transform="translate(0.6,1)"/><path d="M6.5 15 L12.5 20.5 L24 9" fill="none" stroke="#fff" stroke-width="4.4" stroke-linecap="round" stroke-linejoin="round"/></svg>
<div class="a t11" style="left:849.6px;top:629px;letter-spacing:-0.35px;">OK (F12)</div>
<div class="a btn" style="left:918px;top:618px;width:113px;height:35px"></div>
<svg class="a" style="left:922px;top:623px" width="22" height="22" viewBox="0 0 30 30"><defs><radialGradient id="rg" cx="0.4" cy="0.3" r="0.8"><stop offset="0" stop-color="#ff8a6a"/><stop offset="0.6" stop-color="#e8361c"/><stop offset="1" stop-color="#b01c0c"/></radialGradient></defs><circle cx="15" cy="15" r="14" fill="url(#rg)" stroke="#a8200e" stroke-width="0.8"/><path d="M9 9 L21 21 M21 9 L9 21" stroke="#fff" stroke-width="5" stroke-linecap="round"/></svg>
<div class="a t11" style="left:956.8px;top:629px;letter-spacing:-0.43px;">Annulla (ESC)</div>
<svg class="a" style="left:0;top:0" width="1519" height="749" viewBox="0 0 1519 749"><path d="M1079 511 L898 335.5" stroke="#ff0000" stroke-width="3.2" fill="none"/><path d="M879 317 L912.5 332.5 L894.5 349.5 Z" fill="#ff0000"/></svg>
</body></html>
